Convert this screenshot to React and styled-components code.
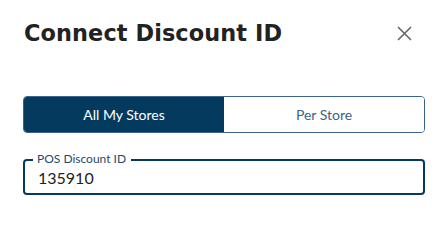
import React, { useState } from 'react';
import styled, { createGlobalStyle } from 'styled-components';

const NAVY = '#053a5f';

const GlobalStyle = createGlobalStyle`
  html, body {
    margin: 0;
    padding: 0;
    background: #fff;
  }
  body {
    font-family: Lato, "Open Sans", sans-serif;
  }
`;

const Dialog = styled.div`
  width: 445px;
  height: 226px;
  box-sizing: border-box;
  padding: 19px 20px 0 23px;
  background: #fff;
`;

const Header = styled.div`
  display: flex;
  align-items: center;
  justify-content: space-between;
  height: 27px;
`;

const Title = styled.h1`
  margin: 0 0 0 1px;
  font-family: "DejaVu Sans", sans-serif;
  font-weight: 700;
  font-size: 22.4px;
  letter-spacing: 0.1px;
  color: #222;
`;

const CloseButton = styled.button`
  display: flex;
  align-items: center;
  justify-content: center;
  width: 26px;
  height: 26px;
  margin-right: 8px;
  margin-top: 1px;
  padding: 0;
  border: none;
  background: none;
  cursor: pointer;
`;

const Segmented = styled.div`
  display: flex;
  width: 402px;
  height: 37px;
  margin-top: 50px;
  box-sizing: border-box;
  border: 1px solid #3b6488;
  border-radius: 4px;
  overflow: hidden;
`;

const Segment = styled.button`
  flex: 1;
  padding: 0;
  border: none;
  font-family: Lato, sans-serif;
  font-size: 14px;
  background: ${props => props.active ? NAVY : '#fff'};
  color: ${props => props.active ? '#fff' : '#3b6488'};
  cursor: pointer;
`;

const Field = styled.div`
  position: relative;
  display: flex;
  align-items: center;
  width: 402px;
  height: 36px;
  margin-top: 26px;
  padding: 0 13px;
  box-sizing: border-box;
  border: 2px solid ${NAVY};
  border-radius: 4px;
`;

const Label = styled.label`
  position: absolute;
  top: -9px;
  left: 8px;
  padding: 0 5px 0 4px;
  background: #fff;
  font-family: Lato, sans-serif;
  font-size: 12px;
  line-height: 14px;
  color: #1e4a6e;
`;

const Input = styled.input`
  width: 100%;
  height: 24px;
  padding: 0;
  border: none;
  outline: none;
  font-family: Lato, sans-serif;
  font-size: 16px;
  color: #222;
  background: transparent;
`;

const App = () => {
  const [mode, setMode] = useState('all');
  const [value, setValue] = useState('135910');

  return (
    <>
      <GlobalStyle />
      <Dialog>
        <Header>
          <Title>Connect Discount ID</Title>
          <CloseButton aria-label="Close">
            <svg width="15" height="15" viewBox="0 0 15 15">
              <path d="M1 1L14 14M14 1L1 14" stroke="#666" strokeWidth="1.6" />
            </svg>
          </CloseButton>
        </Header>
        <Segmented>
          <Segment active={mode === 'all'} onClick={() => setMode('all')}>All My Stores</Segment>
          <Segment active={mode === 'per'} onClick={() => setMode('per')}>Per Store</Segment>
        </Segmented>
        <Field>
          <Label htmlFor="pos-id">POS Discount ID</Label>
          <Input id="pos-id" value={value} onChange={e => setValue(e.target.value)} />
        </Field>
      </Dialog>
    </>
  );
};

export default App;
